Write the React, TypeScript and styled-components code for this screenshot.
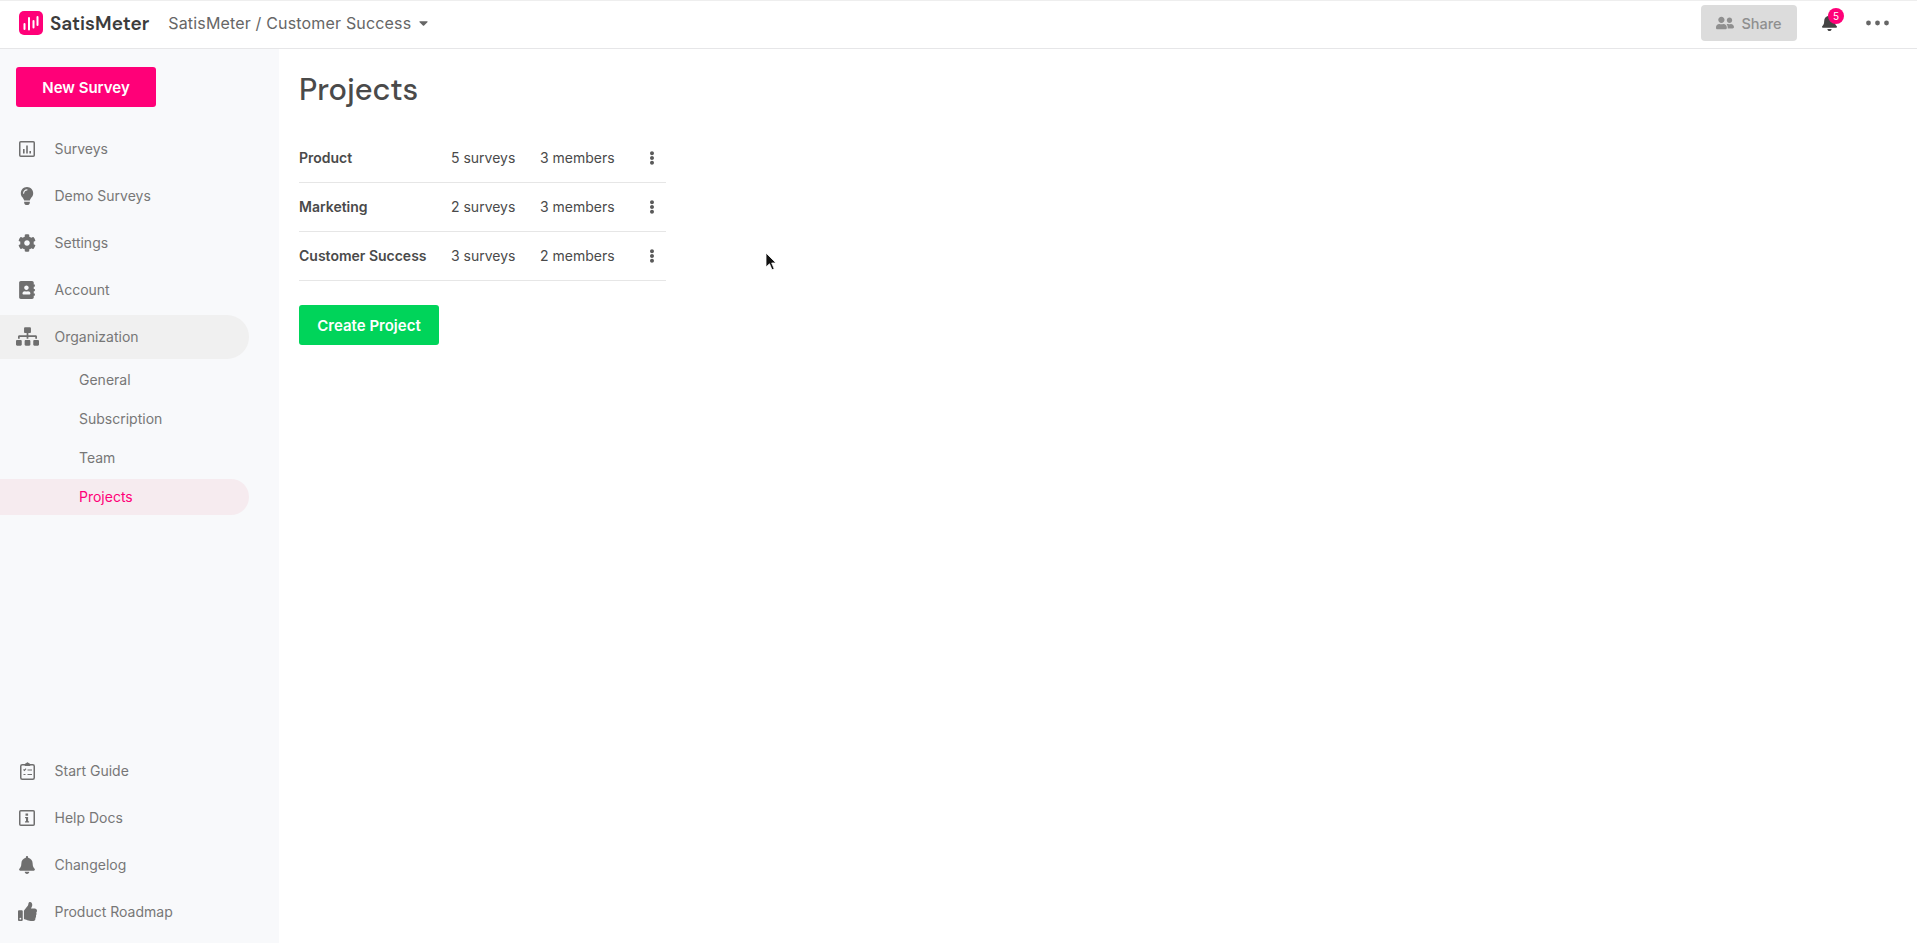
import React from "react";
import styled, { createGlobalStyle } from "styled-components";
import {
  FaAddressBook,
  FaBell,
  FaCaretDown,
  FaCog,
  FaEllipsisV,
  FaLightbulb,
  FaSitemap,
  FaThumbsUp,
  FaUserFriends,
} from "react-icons/fa";

const GlobalStyle = createGlobalStyle`
  html, body {
    margin: 0;
    height: 100%;
    background: #fff;
    font-family: Inter, "Liberation Sans", sans-serif;
    color: #4a4a4a;
    overflow: hidden;
  }
  #root { height: 100%; }
`;

const Page = styled.div`
  display: flex;
  flex-direction: column;
  height: 943px;
  position: relative;
`;

const TopBar = styled.header`
  flex: 0 0 49px;
  box-sizing: border-box;
  display: flex;
  align-items: center;
  padding: 0 28px 3px 19px;
  border-top: 1px solid #eeeeee;
  border-bottom: 1px solid #e6e6e8;
`;

const LogoName = styled.span`
  margin-left: 7px;
  font-family: "DM Sans", Lato, sans-serif;
  font-size: 19px;
  font-weight: 600;
  color: #3c3c3c;
`;

const Crumb = styled.span`
  margin-left: 19px;
  font-size: 16px;
  color: #666;
  letter-spacing: 0.17px;
`;

const CrumbCaret = styled(FaCaretDown)`
  margin-left: 7px;
  width: 11px;
  height: 14px;
  color: #666;
`;

const Right = styled.div`
  margin-left: auto;
  display: flex;
  align-items: center;
`;

const ShareButton = styled.div`
  width: 96px;
  height: 36px;
  display: flex;
  align-items: center;
  justify-content: center;
  gap: 7px;
  background: #dcdcdc;
  border-radius: 4px;
  color: #8f8f8f;
  font-size: 14.5px;
  font-weight: 500;
`;

const BellWrap = styled.div`
  position: relative;
  margin-left: 24px;
  width: 16px;
  height: 18px;
  color: #444;
`;

const Badge = styled.span`
  position: absolute;
  top: -6px;
  left: 7px;
  width: 16px;
  height: 16px;
  border-radius: 50%;
  background: #ff0078;
  color: #fff;
  font-size: 10px;
  line-height: 16px;
  text-align: center;
`;

const More = styled.svg`
  margin-left: 29px;
  color: #666;
`;

const Body = styled.div`
  flex: 1;
  display: flex;
  min-height: 0;
`;

const Sidebar = styled.aside`
  flex: 0 0 279px;
  box-sizing: border-box;
  background: #f8f9fb;
  display: flex;
  flex-direction: column;
  padding: 18px 0 8px;
`;

const PrimaryButton = styled.button<{ $green?: boolean }>`
  width: 140px;
  height: 40px;
  border: 0;
  border-radius: 3px;
  padding: 0;
  background: ${(p) => (p.$green ? "#00d45a" : "#ff0078")};
  color: #fff;
  font-family: Inter, sans-serif;
  font-size: 15px;
  font-weight: 600;
`;

const NewSurvey = styled(PrimaryButton)`
  margin: 0 0 18px 16px;
`;

const NavItem = styled.div<{ $active?: boolean }>`
  width: 249px;
  height: 47px;
  display: flex;
  align-items: center;
  font-size: 14px;
  color: #777;
  ${(p) =>
    p.$active &&
    `
    height: 44px;
    margin-top: 1.5px;
    background: #f0f0f0;
    border-radius: 0 22px 22px 0;
  `}
`;

const IconSlot = styled.span`
  flex: 0 0 54.5px;
  display: flex;
  justify-content: center;
  color: #6f6f6f;
`;

const SubItem = styled.div<{ $active?: boolean }>`
  width: 249px;
  height: 36px;
  margin-top: 3px;
  box-sizing: border-box;
  padding-left: 79px;
  display: flex;
  align-items: center;
  font-size: 14px;
  color: ${(p) => (p.$active ? "#ff0078" : "#777")};
  background: ${(p) => (p.$active ? "#f6ebef" : "transparent")};
  border-radius: 0 18px 18px 0;
`;

const BottomNav = styled.div`
  margin-top: auto;
`;

const Main = styled.main`
  flex: 1;
  padding: 0 20px;
`;

const Title = styled.h1`
  margin: 0;
  padding-top: 19px;
  height: 85px;
  box-sizing: border-box;
  font-family: "DM Sans", Lato, sans-serif;
  font-size: 30.8px;
  line-height: 43px;
  font-weight: 500;
  color: #4a4a4a;
`;

const Table = styled.div`
  width: 367px;
  margin-bottom: 24px;
`;

const Row = styled.div`
  height: 49px;
  box-sizing: border-box;
  padding-bottom: 1px;
  display: grid;
  grid-template-columns: 152px 89px 1fr 24px;
  align-items: center;
  border-bottom: 1.5px solid #e6e6e6;
  font-size: 14px;
  color: #4a4a4a;
`;

const Name = styled.span`
  font-weight: 600;
`;

const Dots = styled(FaEllipsisV)`
  margin-left: 3px;
  width: 14px;
  height: 14px;
  color: #5a5a5a;
`;

const Cursor = styled.svg`
  position: absolute;
  left: 765px;
  top: 252px;
`;

const SurveysIcon = () => (
  <svg width="16" height="16" viewBox="0 0 16 16">
    <rect x="0.75" y="0.75" width="14.5" height="14.5" rx="1" fill="none" stroke="currentColor" strokeWidth="1.5" />
    <path d="M4 8h1.6v4.5H4zM7.2 4.5h1.6v8H7.2zM10.4 10H12v2.5h-1.6z" fill="currentColor" />
  </svg>
);

const GuideIcon = () => (
  <svg width="15" height="18" viewBox="0 0 15 18">
    <rect x="0.75" y="2.75" width="13.5" height="14.5" rx="1.5" fill="none" stroke="currentColor" strokeWidth="1.5" />
    <path d="M5 3.500V2h1.300a1.200 1.200 0 0 1 2.400 0H10v1.500z" fill="currentColor" stroke="currentColor" />
    <path d="M3.500 7.500l1 1 1.500-1.800M7.500 8H12M3.500 12.500h2M7.500 12.500H12" fill="none" stroke="currentColor" strokeWidth="1.100" />
  </svg>
);

const InfoIcon = () => (
  <svg width="16" height="16" viewBox="0 0 16 16">
    <rect x="0.75" y="0.75" width="14.5" height="14.5" rx="1" fill="none" stroke="currentColor" strokeWidth="1.5" />
    <path d="M6.500 3.500h2.600v2.200H6.500zM6 7h3.100v4.200h1v1.300H6v-1.300h1V8.300H6z" fill="currentColor" />
  </svg>
);

const LogoMark = () => (
  <svg width="24" height="24" viewBox="0 0 24 24">
    <rect width="24" height="24" rx="5" fill="#ff0078" />
    <path d="M5.500 13v5M10 7v11.500M14.500 10v6.500M18.500 6v8" stroke="#fff" strokeWidth="2" strokeLinecap="round" />
  </svg>
);

const topNav = [
  { label: "Surveys", icon: <SurveysIcon /> },
  { label: "Demo Surveys", icon: <FaLightbulb size={18} /> },
  { label: "Settings", icon: <FaCog size={18} /> },
  { label: "Account", icon: <FaAddressBook size={18} /> },
];

const bottomNav = [
  { label: "Start Guide", icon: <GuideIcon /> },
  { label: "Help Docs", icon: <InfoIcon /> },
  { label: "Changelog", icon: <FaBell size={18} /> },
  { label: "Product Roadmap", icon: <FaThumbsUp size={19} /> },
];

const subNav = ["General", "Subscription", "Team", "Projects"];

const projects = [
  { name: "Product", surveys: "5 surveys", members: "3 members" },
  { name: "Marketing", surveys: "2 surveys", members: "3 members" },
  { name: "Customer Success", surveys: "3 surveys", members: "2 members" },
];

export default function App() {
  return (
    <Page>
      <GlobalStyle />
      <TopBar>
        <LogoMark />
        <LogoName>SatisMeter</LogoName>
        <Crumb>SatisMeter / Customer Success</Crumb>
        <CrumbCaret />
        <Right>
          <ShareButton>
            <FaUserFriends size={18} />
            Share
          </ShareButton>
          <BellWrap>
            <FaBell size={17} />
            <Badge>5</Badge>
          </BellWrap>
          <More width="23" height="6" viewBox="0 0 23 6" fill="currentColor">
            <circle cx="2.5" cy="3" r="2.4" />
            <circle cx="11.5" cy="3" r="2.4" />
            <circle cx="20.5" cy="3" r="2.4" />
          </More>
        </Right>
      </TopBar>
      <Body>
        <Sidebar>
          <NewSurvey>New Survey</NewSurvey>
          {topNav.map((item) => (
            <NavItem key={item.label}>
              <IconSlot>{item.icon}</IconSlot>
              {item.label}
            </NavItem>
          ))}
          <NavItem $active>
            <IconSlot>
              <FaSitemap size={23} />
            </IconSlot>
            Organization
          </NavItem>
          {subNav.map((label) => (
            <SubItem key={label} $active={label === "Projects"}>
              {label}
            </SubItem>
          ))}
          <BottomNav>
            {bottomNav.map((item) => (
              <NavItem key={item.label}>
                <IconSlot>{item.icon}</IconSlot>
                {item.label}
              </NavItem>
            ))}
          </BottomNav>
        </Sidebar>
        <Main>
          <Title>Projects</Title>
          <Table>
            {projects.map((p) => (
              <Row key={p.name}>
                <Name>{p.name}</Name>
                <span>{p.surveys}</span>
                <span>{p.members}</span>
                <Dots />
              </Row>
            ))}
          </Table>
          <PrimaryButton $green>Create Project</PrimaryButton>
        </Main>
      </Body>
      <Cursor width="14" height="20" viewBox="0 0 14 20">
        <path d="M1 1v14l3.500-3.200 2.500 6 2.200-1-2.500-5.800H11z" fill="#111" stroke="#fff" strokeWidth="0.8" />
      </Cursor>
    </Page>
  );
}
